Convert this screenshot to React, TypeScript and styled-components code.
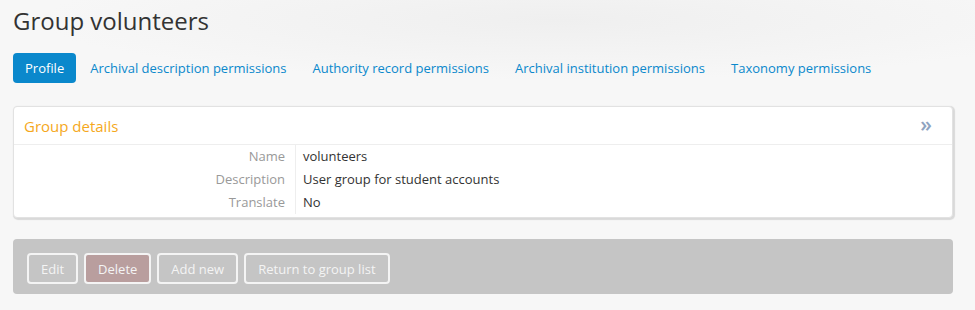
import React from "react";
import styled, { createGlobalStyle } from "styled-components";

const Global = createGlobalStyle`
  html, body { margin: 0; padding: 0; }
  body {
    background: #f7f7f7;
    font-family: "Open Sans", "Liberation Sans", sans-serif;
    color: #333;
  }
`;

const Page = styled.div`
  min-height: 310px;
  box-sizing: border-box;
  padding: 6px 22px 0 13px;
  background: radial-gradient(ellipse 520px 60px at 560px 20px, #efefef 0%, rgba(247,247,247,0) 100%);
`;

const Title = styled.h1`
  margin: 0;
  font-size: 24px;
  font-weight: 400;
  line-height: 30px;
  color: #333;
`;

const Tabs = styled.nav`
  display: flex;
  gap: 2px;
  margin-top: 17px;
`;

const Tab = styled.a<{ $active?: boolean }>`
  display: flex;
  align-items: center;
  height: 30px;
  padding: 0 12px;
  border-radius: 4px;
  font-size: 13px;
  text-decoration: none;
  cursor: pointer;
  color: ${(p) => (p.$active ? "#fff" : "#0a88cc")};
  background: ${(p) => (p.$active ? "#0a88cc" : "transparent")};
`;

const Panel = styled.section`
  margin-top: 23px;
  background: #fff;
  border: 1px solid #e2e2e2;
  border-radius: 4px;
  box-shadow: 1px 1px 1px 1px rgba(0, 0, 0, 0.12);
`;

const PanelHeader = styled.div`
  display: flex;
  align-items: center;
  justify-content: space-between;
  height: 37px;
  padding: 0 20px 0 10px;
  border-bottom: 1px solid #eee;
`;

const PanelTitle = styled.h2`
  margin: 0;
  font-size: 15px;
  font-weight: 400;
  color: #f5a81c;
`;

const Toggle = styled.span`
  font-size: 21px;
  font-weight: 600;
  line-height: 1;
  color: #8fa3c0;
  margin-top: -2px;
`;

const Fields = styled.div`
  display: grid;
  grid-template-columns: 282px 1fr;
  padding-bottom: 3px;
`;

const Label = styled.div`
  text-align: right;
  padding-right: 10px;
  font-size: 13px;
  line-height: 23px;
  color: #999;
  border-right: 1px solid #eee;
`;

const Value = styled.div`
  padding-left: 7px;
  font-size: 13px;
  line-height: 23px;
  color: #333;
`;

const Actions = styled.div`
  display: flex;
  gap: 6px;
  margin-top: 21px;
  padding: 14px 14px 10px;
  background: #c5c5c5;
  border-radius: 4px;
`;

const ActionButton = styled.button<{ $danger?: boolean }>`
  height: 31px;
  padding: 0 12px;
  border: 2px solid #f4f4f4;
  border-radius: 4px;
  background: ${(p) => (p.$danger ? "#b99e9e" : "transparent")};
  color: #f4f4f4;
  font-family: "Open Sans", "Liberation Sans", sans-serif;
  font-size: 13px;
  cursor: pointer;
`;

const fields = [
  ["Name", "volunteers"],
  ["Description", "User group for student accounts"],
  ["Translate", "No"],
];

export default function App() {
  return (
    <>
      <Global />
      <Page>
        <Title>Group volunteers</Title>
        <Tabs>
          <Tab $active>Profile</Tab>
          <Tab>Archival description permissions</Tab>
          <Tab>Authority record permissions</Tab>
          <Tab>Archival institution permissions</Tab>
          <Tab>Taxonomy permissions</Tab>
        </Tabs>
        <Panel>
          <PanelHeader>
            <PanelTitle>Group details</PanelTitle>
            <Toggle>»</Toggle>
          </PanelHeader>
          <Fields>
            {fields.map(([k, v]) => (
              <React.Fragment key={k}>
                <Label>{k}</Label>
                <Value>{v}</Value>
              </React.Fragment>
            ))}
          </Fields>
        </Panel>
        <Actions>
          <ActionButton>Edit</ActionButton>
          <ActionButton $danger>Delete</ActionButton>
          <ActionButton>Add new</ActionButton>
          <ActionButton>Return to group list</ActionButton>
        </Actions>
      </Page>
    </>
  );
}
